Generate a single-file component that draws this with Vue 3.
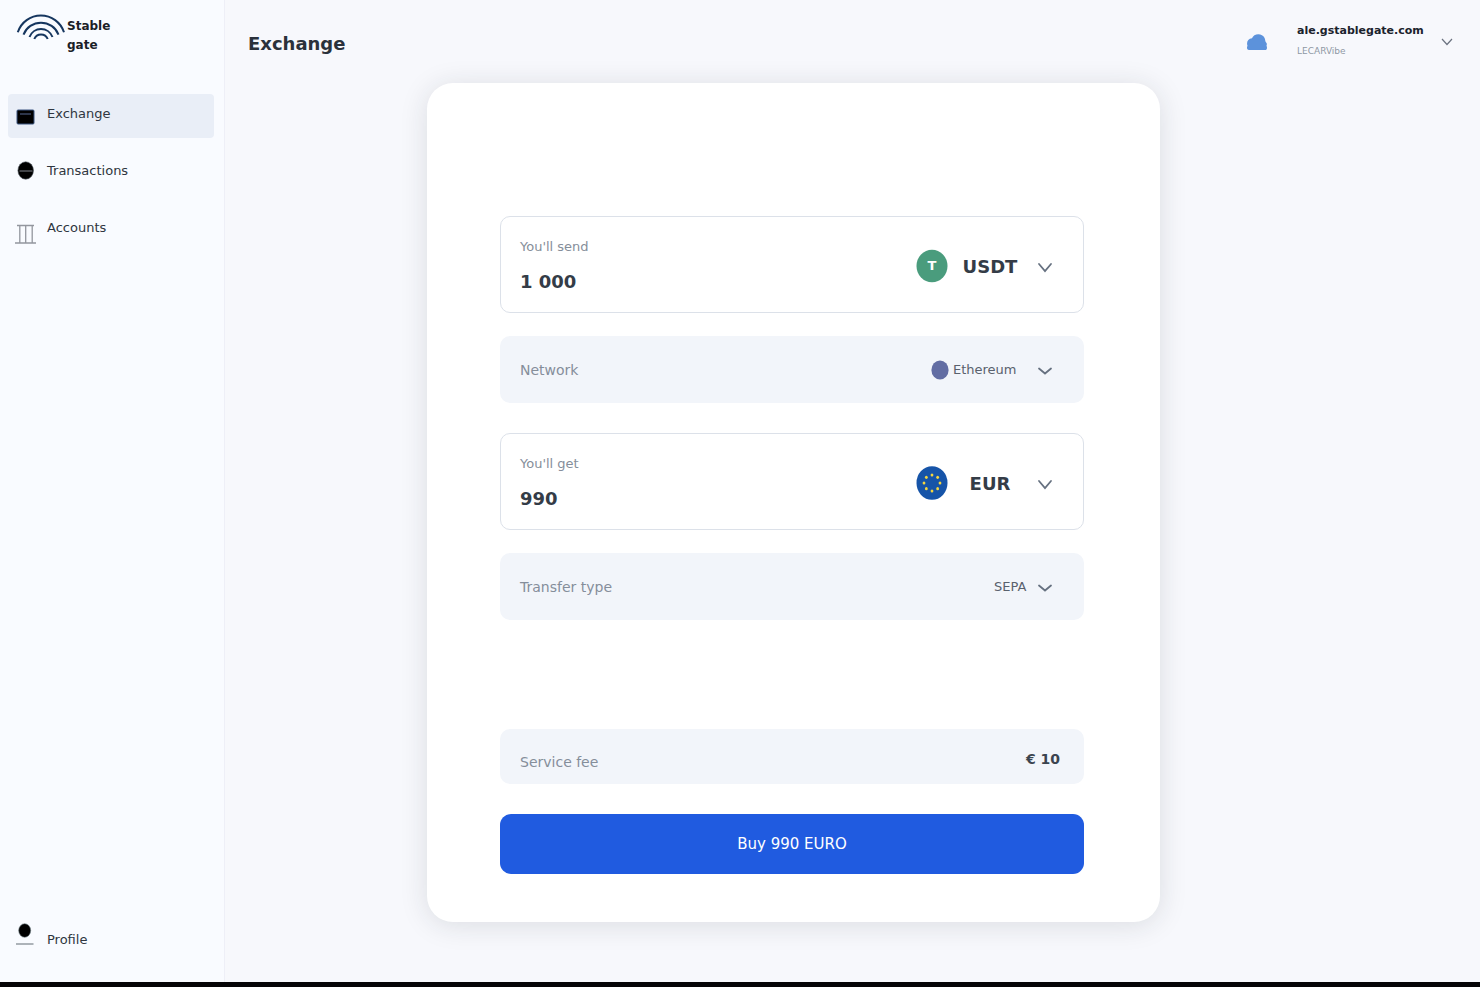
<script setup>
import { computed, ref } from 'vue';

const navItems = [
  { id: 'exchange', label: 'Exchange' },
  { id: 'transactions', label: 'Transactions' },
  { id: 'accounts', label: 'Accounts' }
];

const activeItem = ref('exchange');

const sendAmount = ref('1 000');
const getAmount = ref('990');
const sendCurrency = ref('USDT');
const getCurrency = ref('EUR');
const network = ref('Ethereum');
const transferType = ref('SEPA');
const serviceFee = ref(10);

const buyLabel = computed(() => `Buy ${getAmount.value} EURO`);

// positions of the stars on the EU flag
const stars = Array.from({ length: 8 }, (_, i) => {
  const angle = (i * Math.PI) / 4;
  return {
    x: 16 + 8 * Math.sin(angle),
    y: 17 - 8 * Math.cos(angle)
  };
});
</script>

<template>
  <div class="app">
    <aside class="sidebar">
      <a class="logo" href="#">
        <svg class="logo-mark" width="50" height="30" viewBox="16 12 50 30" fill="none" stroke="#16365f" stroke-width="2">
          <path d="M17.8 32.3A24.3 24.3 0 0 1 64 32.3"/>
          <path d="M23.500 34.600A18.800 18.800 0 0 1 58.500 34.600"/>
          <path d="M29.500 37A12.300 12.300 0 0 1 52.500 37"/>
          <path d="M34.300 39A7.200 7.200 0 0 1 47.700 39"/>
        </svg>
        <span class="logo-text">Stable<br>gate</span>
      </a>

      <nav class="nav">
        <a
          v-for="item in navItems"
          :key="item.id"
          href="#"
          class="nav-item"
          :class="{ active: item.id === activeItem }"
          @click.prevent="activeItem = item.id"
        >
          <svg v-if="item.id === 'exchange'" class="nav-icon" viewBox="0 0 22 44">
            <rect x="3" y="16" width="17" height="14" rx="1" fill="#000" stroke="#3a5580"/>
            <path d="M6 20h11" stroke="#3b4763" stroke-width="1.5"/>
          </svg>
          <svg v-else-if="item.id === 'transactions'" class="nav-icon" viewBox="0 0 22 44">
            <ellipse cx="11.7" cy="19.5" rx="7.8" ry="8.7" fill="#000" stroke="#59616a" stroke-width=".6"/>
            <path d="M5.5 20h13" stroke="#6b6f75" stroke-width="1.2"/>
          </svg>
          <svg v-else class="nav-icon" viewBox="0 0 22 44" fill="none" stroke="#93969e" stroke-width="1.3">
            <path d="M3 17.5h17M1 35h21M5.8 17.5v17M11.7 17.5v17M18.2 17.5v17"/>
          </svg>
          <span>{{ item.label }}</span>
        </a>
      </nav>

      <a href="#" class="nav-item profile">
        <svg class="nav-icon" viewBox="0 0 22 44">
          <ellipse cx="10.7" cy="12.5" rx="6" ry="6.8" fill="#000" stroke="#6c7a80" stroke-width=".6"/>
          <path d="M2 26h17.5" stroke="#9aa2a8" stroke-width="1.6"/>
        </svg>
        <span>Profile</span>
      </a>
    </aside>

    <main class="main">
      <header class="header">
        <h1 class="title">Exchange</h1>
        <svg class="cloud" width="22" height="18" viewBox="0 0 22 18" fill="#5c92db">
          <path d="M3 17C.7 17 .6 14.300 1.500 12.800C.2 9.500 1.800 5.700 6 5.300C7.500.3 16-.6 18.600 5C19.500 7.300 19 8.600 20.300 9.700C21.500 11 20.500 12 20.500 12.800C21.500 14.500 21 17 19 17Z"/>
        </svg>
        <button class="user" type="button">
          <span class="user-info">
            <span class="user-name">ale.gstablegate.com</span>
            <span class="user-org">LECARVibe</span>
          </span>
          <svg width="12" height="8" viewBox="0 0 12 8" fill="none" stroke="#6b7280" stroke-width="1.2">
            <path d="M1 1l5 5.500L11 1"/>
          </svg>
        </button>
      </header>

      <div class="content">
        <form class="card" @submit.prevent>
          <div class="field amount">
            <div class="amount-value">
              <label for="send-amount">You'll send</label>
              <input id="send-amount" v-model="sendAmount" type="text">
            </div>
            <svg class="coin" viewBox="0 0 32 34">
              <ellipse cx="16" cy="17" rx="15.500" ry="16.300" fill="#4a9c7d"/>
              <text class="coin-text" x="16" y="21" text-anchor="middle">T</text>
            </svg>
            <select v-model="sendCurrency" class="currency" aria-label="Send currency">
              <option>USDT</option>
              <option>USDC</option>
            </select>
            <svg class="chevron" viewBox="0 0 16 16"><path d="M2 6l6 7 6-7"/></svg>
          </div>

          <div class="field option">
            <label for="network">Network</label>
            <svg class="network-dot" viewBox="0 0 18 20">
              <ellipse cx="9" cy="10" rx="8.600" ry="9.500" fill="#626da3"/>
            </svg>
            <select id="network" v-model="network" class="network">
              <option>Ethereum</option>
              <option>Tron</option>
            </select>
            <svg class="chevron" viewBox="0 0 16 16"><path d="M2 6.500l6 5 6-5"/></svg>
          </div>

          <div class="field amount second">
            <div class="amount-value">
              <label for="get-amount">You'll get</label>
              <input id="get-amount" v-model="getAmount" type="text">
            </div>
            <svg class="coin" viewBox="0 0 32 34">
              <ellipse cx="16" cy="17" rx="15.500" ry="16.800" fill="#1654a8"/>
              <ellipse v-for="(s, i) in stars" :key="i" :cx="s.x" :cy="s.y" rx="1.400" ry="1.600" fill="#f5d63d"/>
            </svg>
            <select v-model="getCurrency" class="currency" aria-label="Receive currency">
              <option>EUR</option>
              <option>USD</option>
            </select>
            <svg class="chevron" viewBox="0 0 16 16"><path d="M2 6l6 7 6-7"/></svg>
          </div>

          <div class="field option">
            <label for="transfer-type">Transfer type</label>
            <select id="transfer-type" v-model="transferType" class="transfer">
              <option>SEPA</option>
            </select>
            <svg class="chevron" viewBox="0 0 16 16"><path d="M2 6.500l6 5 6-5"/></svg>
          </div>

          <div class="field fee">
            <span class="fee-label">Service fee</span>
            <strong class="fee-value">€ {{ serviceFee }}</strong>
          </div>

          <button class="buy" type="submit">{{ buyLabel }}</button>
        </form>
      </div>
    </main>
  </div>
</template>

<style>
body {
  margin: 0;
  background: #f7f8fc;
}
</style>

<style scoped>
.app {
  display: flex;
  min-height: 100vh;
  box-sizing: border-box;
  border-bottom: 5px solid #050406;
  font-family: "DejaVu Sans", Verdana, sans-serif;
  font-size: 13px;
  color: #2f3640;
  background: #f7f8fc;
}

.app a {
  color: inherit;
  text-decoration: none;
}

input,
select,
button {
  font-family: inherit;
  border: none;
  background: transparent;
  margin: 0;
  padding: 0;
}

/* Sidebar */
.sidebar {
  display: flex;
  flex-direction: column;
  flex: 0 0 225px;
  box-sizing: border-box;
  padding: 12px 10px 20px 8px;
  background: #f9fbff;
  border-right: 1px solid #eeeff7;
}

.logo {
  display: flex;
  align-items: flex-start;
  gap: 1px;
  padding-left: 8px;
}

.logo-text {
  padding-top: 5px;
  font-size: 12px;
  font-weight: bold;
  line-height: 19px;
  color: #1a2027;
}

.nav {
  display: flex;
  flex-direction: column;
  gap: 13px;
  margin-top: 39px;
}

.nav-item {
  display: flex;
  gap: 11px;
  height: 44px;
  padding-left: 6px;
  border-radius: 4px;
  line-height: 40px;
}

.nav-item.active {
  background: #e9eef7;
}

.nav-icon {
  width: 22px;
  height: 44px;
}

.profile {
  margin-top: auto;
  line-height: 44px;
}

/* Main */
.main {
  flex: 1;
  min-width: 0;
}

.header {
  display: flex;
  align-items: center;
  height: 83px;
  box-sizing: border-box;
  padding: 1px 27px 0 23px;
}

.title {
  flex: 1;
  margin: 0;
  padding-top: 3px;
  font-size: 18px;
  color: #2a313b;
}

.user {
  display: flex;
  align-items: center;
  gap: 12px;
  margin-left: 29px;
  text-align: left;
  cursor: pointer;
}

.user-info {
  display: flex;
  flex-direction: column;
  min-width: 132px;
  padding-bottom: 2px;
}

.user-name {
  font-size: 11px;
  font-weight: bold;
  line-height: 20px;
  color: #1b222c;
}

.user-org {
  font-size: 9px;
  line-height: 20px;
  color: #8f98a5;
}

.content {
  display: grid;
  grid-template-columns: 202fr minmax(480px, 733fr) 320fr;
  padding-bottom: 60px;
}

/* Card */
.card {
  grid-column: 2;
  display: flex;
  flex-direction: column;
  padding: 133px 76px 48px 73px;
  border-radius: 26px;
  background: #fff;
  box-shadow: 0 3px 28px rgba(30, 35, 50, 0.13);
}

.field {
  display: flex;
  align-items: center;
  box-sizing: border-box;
  padding: 0 31px 0 20px;
  border-radius: 10px;
}

.field label,
.fee-label {
  color: #858e9a;
}

.amount {
  min-height: 97px;
  padding: 3px 30px 0 19px;
  border: 1px solid #dce1e9;
}

.amount.second {
  margin-top: 30px;
}

.amount-value {
  display: flex;
  flex: 1;
  flex-direction: column;
  gap: 10px;
  min-width: 0;
}

.amount-value label {
  line-height: 20px;
}

.amount-value input {
  width: 100%;
  height: 28px;
  font-size: 18px;
  font-weight: bold;
  color: #343c47;
}

.option,
.fee {
  background: #f2f5fa;
  font-size: 14px;
}

.option {
  min-height: 67px;
  margin-top: 23px;
}

.option label {
  flex: 1;
}

.coin {
  width: 32px;
  height: 34px;
  margin-right: 10px;
}

.coin-text {
  font-size: 13px;
  font-weight: bold;
  fill: #fff;
}

select {
  appearance: none;
  font-size: 13px;
  color: #59616d;
  cursor: pointer;
}

.currency {
  width: 64px;
  margin-right: 15px;
  font-size: 18px;
  font-weight: bold;
  text-align: center;
  color: #343c47;
}

.network-dot {
  width: 18px;
  height: 20px;
  margin-right: 4px;
}

.network {
  width: 66px;
  margin-right: 18px;
}

.transfer {
  margin-right: 10px;
}

.chevron {
  width: 16px;
  height: 16px;
  fill: none;
  stroke: #667180;
  stroke-width: 1.8;
  stroke-linecap: round;
}

.fee {
  align-items: flex-end;
  justify-content: space-between;
  min-height: 55px;
  margin-top: 109px;
  padding: 0 24px 13px 20px;
}

.fee-label {
  line-height: 18px;
}

.fee-value {
  line-height: 24px;
  color: #3b444f;
}

.buy {
  height: 60px;
  margin-top: 30px;
  border-radius: 11px;
  background: #205be0;
  color: #fff;
  font-size: 15px;
  cursor: pointer;
}
</style>
